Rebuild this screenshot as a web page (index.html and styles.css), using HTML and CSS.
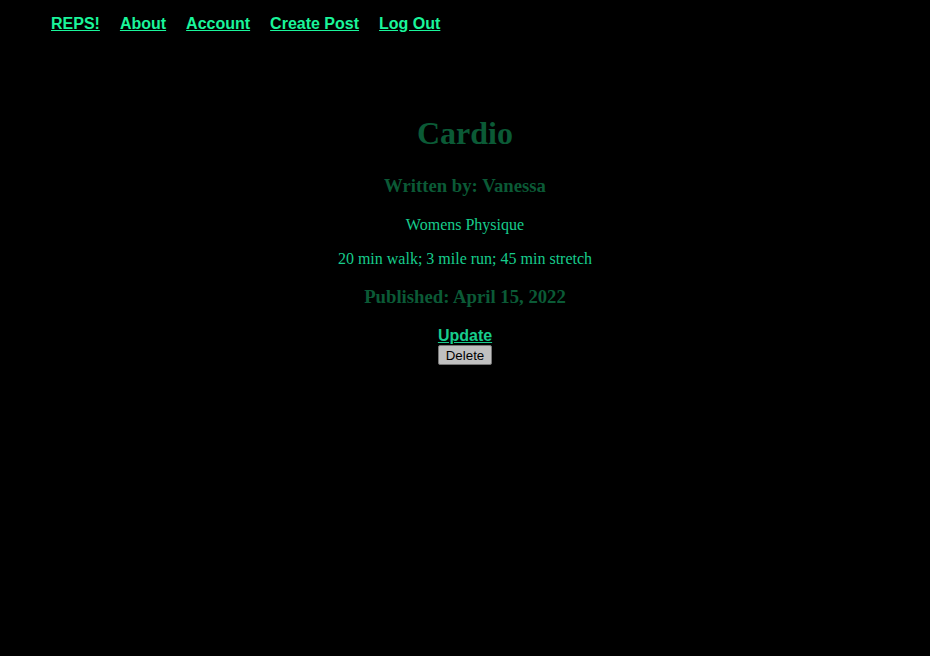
FILE: index.html
```html
<!DOCTYPE html>
<html>
<head>
<meta charset="utf-8">
<link rel="stylesheet" href="styles.css">
</head>
<body>
<nav class="nav">
  <a href="#">REPS!</a>
  <a href="#">About</a>
  <a href="#">Account</a>
  <a href="#">Create Post</a>
  <a href="#">Log Out</a>
</nav>
<main class="post">
  <h1 class="title">Cardio</h1>
  <h3 class="author">Written by: Vanessa</h3>
  <p class="text">Womens Physique</p>
  <p class="text">20 min walk; 3 mile run; 45 min stretch</p>
  <h3 class="author">Published: April 15, 2022</h3>
  <div class="actions">
    <a href="#" class="update">Update</a>
    <form><button type="button" class="delete">Delete</button></form>
  </div>
</main>
</body>
</html>
```
FILE: styles.css
```css
html, body {
  background: #000;
}
body {
  margin: 8px;
  font-family: "Liberation Serif", "Times New Roman", serif;
}
.nav {
  display: flex;
  gap: 20px;
  padding: 7px 0 0 43px;
  height: 57px;
  box-sizing: border-box;
}
.nav a {
  font-family: "Liberation Sans", Arial, sans-serif;
  font-weight: bold;
  font-size: 16px;
  color: #1af59b;
  text-decoration: underline;
}
.post {
  text-align: center;
  padding-top: 29px;
}
.title {
  font-size: 32px;
  color: #0b5a36;
  margin: 21px 0 23px;
}
.author {
  font-size: 18.72px;
  color: #0b5a36;
  margin: 18.72px 0;
}
.text {
  font-size: 16px;
  color: #17cc8c;
  margin: 16px 0;
}
.actions {
  font-family: "Liberation Sans", Arial, sans-serif;
}
.update {
  font-weight: bold;
  font-size: 16px;
  color: #17cc8c;
}
.actions form {
  margin: 0;
}
.delete {
  font-family: "Liberation Sans", Arial, sans-serif;
  font-size: 13.33px;
  background: #c0c0c0;
  border: 1px solid #767676;
  border-radius: 2px;
  padding: 2px 7px 1px;
  color: #000;
}
```
